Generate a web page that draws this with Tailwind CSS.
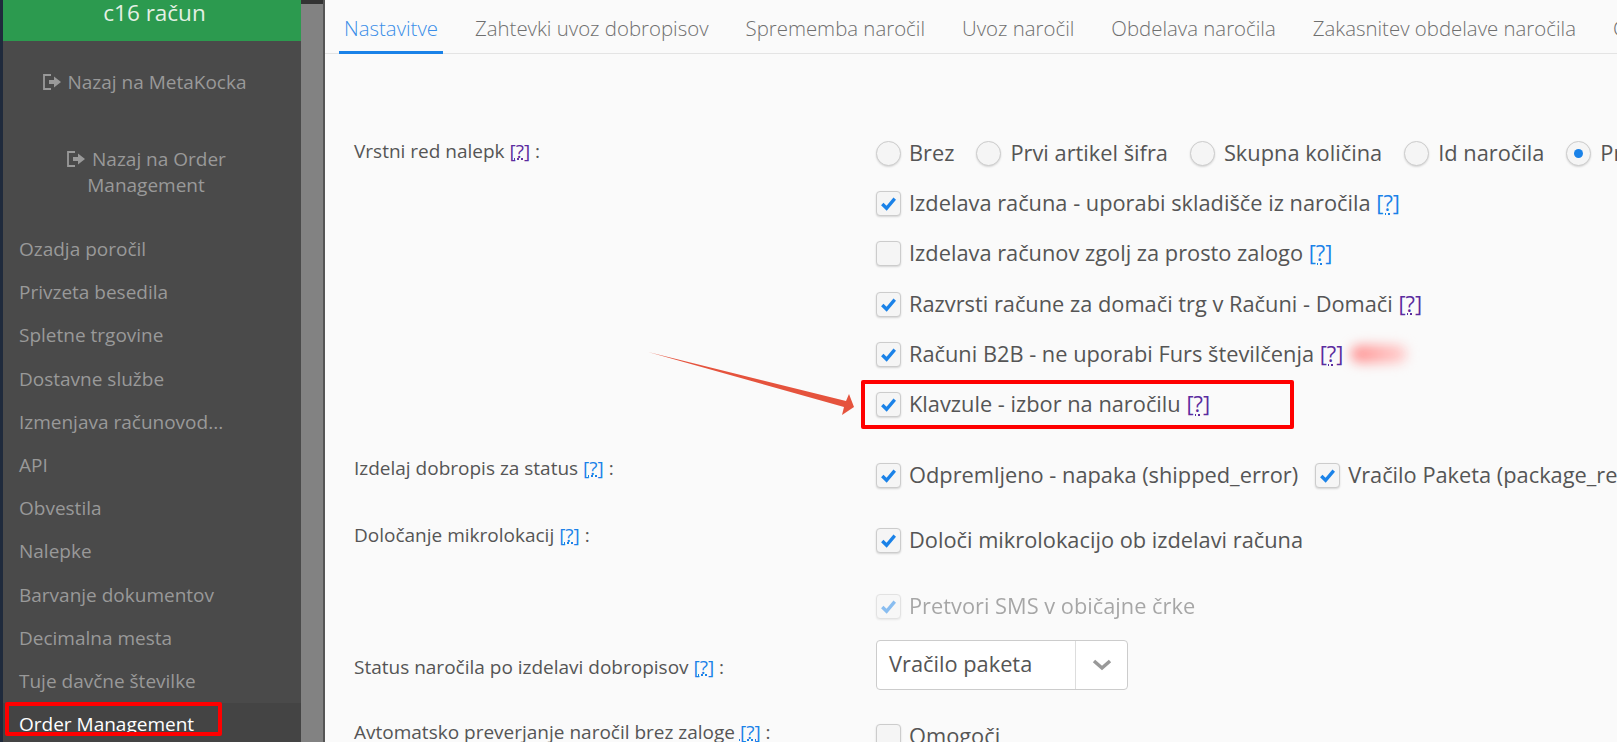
<!DOCTYPE html>
<html lang="sl">
<head>
  <meta charset="UTF-8" />
  <title>Nastavitve</title>
  <script src="https://cdn.jsdelivr.net/npm/@tailwindcss/browser@4"></script>
</head>
<body class="font-['Open_Sans',sans-serif] text-[21.8px] text-[#555] bg-[#fafafa] overflow-hidden">
  <div class="relative flex w-[1617px] h-[742px] overflow-hidden">

    <!-- sidebar -->
    <aside class="w-[301px] shrink-0 h-full border-l-[3px] border-[#1f2a3c] bg-[#4a4a4a] text-[#999] flex flex-col">
      <div class="h-[41px] shrink-0 pl-[5px] bg-[#2c9a4f] text-[#e4f0e4] text-[22.5px] leading-[26px] text-center">c16 račun</div>
      <a class="mt-[28px] shrink-0 pr-[16px] text-center leading-[26px] text-[19px]">
        <svg class="inline-block w-[20px] h-[18px] align-[-2px] mr-[1px]" viewBox="0 0 20 18"><path d="M9 2H2v14h7" fill="none" stroke="#999" stroke-width="1.800"/><path d="M7 7h5V3.500L19 9l-7 5.500V11H7z" fill="#999"/></svg>
        Nazaj na MetaKocka
      </a>
      <a class="mt-[51px] shrink-0 pl-[36px] pr-[48px] text-center leading-[26px] text-[19px]">
        <svg class="inline-block w-[20px] h-[18px] align-[-2px] mr-[1px]" viewBox="0 0 20 18"><path d="M9 2H2v14h7" fill="none" stroke="#999" stroke-width="1.800"/><path d="M7 7h5V3.500L19 9l-7 5.500V11H7z" fill="#999"/></svg>
        Nazaj na Order Management
      </a>
      <nav class="mt-[30px] shrink-0 flex flex-col text-[19px]">
        <a class="h-[43.2px] leading-[43px] pl-[16px]">Ozadja poročil</a>
        <a class="h-[43.2px] leading-[43px] pl-[16px]">Privzeta besedila</a>
        <a class="h-[43.2px] leading-[43px] pl-[16px]">Spletne trgovine</a>
        <a class="h-[43.2px] leading-[43px] pl-[16px]">Dostavne službe</a>
        <a class="h-[43.2px] leading-[43px] pl-[16px]">Izmenjava računovod...</a>
        <a class="h-[43.2px] leading-[43px] pl-[16px]">API</a>
        <a class="h-[43.2px] leading-[43px] pl-[16px]">Obvestila</a>
        <a class="h-[43.2px] leading-[43px] pl-[16px]">Nalepke</a>
        <a class="h-[43.2px] leading-[43px] pl-[16px]">Barvanje dokumentov</a>
        <a class="h-[43.2px] leading-[43px] pl-[16px]">Decimalna mesta</a>
        <a class="h-[43.2px] leading-[43px] pl-[16px]">Tuje davčne številke</a>
        <a class="h-[43.2px] leading-[43px] pl-[16px] bg-[#444] text-white font-medium">Order Management</a>
      </nav>
    </aside>

    <!-- gray strip -->
    <div class="w-[24px] shrink-0 bg-[#828282] border-r-2 border-[#555] flex flex-col">
      <div class="h-[4px] bg-[#333]"></div>
    </div>

    <!-- main -->
    <main class="flex-1 min-w-0 overflow-hidden whitespace-nowrap">
      <div class="h-[54px] border-b border-[#e4e4e4] pl-[14px] flex text-[20.4px] font-light text-[#6f6f6f]">
        <a class="h-[54px] px-[5px] mr-[26px] leading-[56px] text-[#3b8ee8] border-b-[3px] border-[#1a82e8]">Nastavitve</a>
        <a class="px-[6px] mr-[25px] leading-[56px]">Zahtevki uvoz dobropisov</a>
        <a class="px-[6px] mr-[25px] leading-[56px]">Sprememba naročil</a>
        <a class="px-[6px] mr-[25px] leading-[56px]">Uvoz naročil</a>
        <a class="px-[6px] mr-[25px] leading-[56px]">Obdelava naročila</a>
        <a class="px-[6px] mr-[25px] leading-[56px]">Zakasnitev obdelave naročila</a>
        <a class="px-[6px] leading-[56px]">C</a>
      </div>

      <div class="mt-[74px] pl-[29px]">
        <!-- Vrstni red nalepk -->
        <div class="flex items-start">
          <div class="w-[522px] shrink-0 pt-[11px] leading-[24px] text-[19px]">Vrstni red nalepk <a class="text-[#5b2c9f] underline decoration-dotted">[?]</a> :</div>
          <div class="flex flex-col">
            <div class="h-[50.3px] flex items-center">
              <span class="w-[25px] h-[25px] rounded-full border border-[#ccc] bg-[#f5f5f5] shadow-[0_1px_2px_rgba(0,0,0,0.15)] mr-[8px]"></span><span class="mr-[22px]">Brez</span>
              <span class="w-[25px] h-[25px] rounded-full border border-[#ccc] bg-[#f5f5f5] shadow-[0_1px_2px_rgba(0,0,0,0.15)] mr-[9px]"></span><span class="mr-[22px]">Prvi artikel šifra</span>
              <span class="w-[25px] h-[25px] rounded-full border border-[#ccc] bg-[#f5f5f5] shadow-[0_1px_2px_rgba(0,0,0,0.15)] mr-[9px]"></span><span class="mr-[22px]">Skupna količina</span>
              <span class="w-[25px] h-[25px] rounded-full border border-[#ccc] bg-[#f5f5f5] shadow-[0_1px_2px_rgba(0,0,0,0.15)] mr-[9px]"></span><span class="mr-[22px]">Id naročila</span>
              <span class="w-[25px] h-[25px] rounded-full border border-[#ccc] bg-[#f5f5f5] shadow-[0_1px_2px_rgba(0,0,0,0.15)] mr-[9px] flex items-center justify-center"><span class="w-[9px] h-[9px] rounded-full bg-[#1a82e8]"></span></span><span>Pr</span>
            </div>
            <div class="h-[50.3px] flex items-center">
              <span class="w-[25px] h-[25px] rounded-[4px] border border-[#ccc] bg-[#f5f5f5] shadow-[0_1px_2px_rgba(0,0,0,0.15)] mr-[8px]"><svg viewBox="0 0 24 24"><path d="M5.500 12.500L10 17L18.500 7" fill="none" stroke="#1a82e8" stroke-width="3.500"/></svg></span>
              <span>Izdelava računa - uporabi skladišče iz naročila <a class="text-[#1a82e8] underline decoration-dotted">[?]</a></span>
            </div>
            <div class="h-[50.3px] flex items-center">
              <span class="w-[25px] h-[25px] rounded-[4px] border border-[#ccc] bg-[#f5f5f5] shadow-[0_1px_2px_rgba(0,0,0,0.15)] mr-[8px]"></span>
              <span>Izdelava računov zgolj za prosto zalogo <a class="text-[#1a82e8] underline decoration-dotted">[?]</a></span>
            </div>
            <div class="h-[50.3px] flex items-center">
              <span class="w-[25px] h-[25px] rounded-[4px] border border-[#ccc] bg-[#f5f5f5] shadow-[0_1px_2px_rgba(0,0,0,0.15)] mr-[8px]"><svg viewBox="0 0 24 24"><path d="M5.500 12.500L10 17L18.500 7" fill="none" stroke="#1a82e8" stroke-width="3.500"/></svg></span>
              <span>Razvrsti račune za domači trg v Računi - Domači <a class="text-[#5b2c9f] underline decoration-dotted">[?]</a></span>
            </div>
            <div class="h-[50.3px] flex items-center">
              <span class="w-[25px] h-[25px] rounded-[4px] border border-[#ccc] bg-[#f5f5f5] shadow-[0_1px_2px_rgba(0,0,0,0.15)] mr-[8px]"><svg viewBox="0 0 24 24"><path d="M5.500 12.500L10 17L18.500 7" fill="none" stroke="#1a82e8" stroke-width="3.500"/></svg></span>
              <span>Računi B2B - ne uporabi Furs številčenja <a class="text-[#5b2c9f] underline decoration-dotted">[?]</a></span>
              <span class="ml-[8px] w-[56px] h-[18px] rounded-full bg-linear-to-r from-[#ff8f8f] to-[#ffd0d0] blur-[6px]"></span>
            </div>
            <div class="h-[50.3px] flex items-center">
              <span class="w-[25px] h-[25px] rounded-[4px] border border-[#ccc] bg-[#f5f5f5] shadow-[0_1px_2px_rgba(0,0,0,0.15)] mr-[8px]"><svg viewBox="0 0 24 24"><path d="M5.500 12.500L10 17L18.500 7" fill="none" stroke="#1a82e8" stroke-width="3.500"/></svg></span>
              <span>Klavzule - izbor na naročilu <a class="text-[#5b2c9f] underline decoration-dotted">[?]</a></span>
            </div>
          </div>
        </div>

        <!-- Izdelaj dobropis -->
        <div class="flex items-start mt-[21px]">
          <div class="w-[522px] shrink-0 pt-[5px] leading-[24px] text-[19px]">Izdelaj dobropis za status <a class="text-[#1a82e8] underline decoration-dotted">[?]</a> :</div>
          <div class="h-[50px] flex items-center">
            <span class="w-[25px] h-[25px] rounded-[4px] border border-[#ccc] bg-[#f5f5f5] shadow-[0_1px_2px_rgba(0,0,0,0.15)] mr-[8px]"><svg viewBox="0 0 24 24"><path d="M5.500 12.500L10 17L18.500 7" fill="none" stroke="#1a82e8" stroke-width="3.500"/></svg></span>
            <span class="mr-[17px]">Odpremljeno - napaka (shipped_error)</span>
            <span class="w-[25px] h-[25px] rounded-[4px] border border-[#ccc] bg-[#f5f5f5] shadow-[0_1px_2px_rgba(0,0,0,0.15)] mr-[8px]"><svg viewBox="0 0 24 24"><path d="M5.500 12.500L10 17L18.500 7" fill="none" stroke="#1a82e8" stroke-width="3.500"/></svg></span>
            <span>Vračilo Paketa (package_re</span>
          </div>
        </div>

        <!-- Mikrolokacije -->
        <div class="flex items-start mt-[15px]">
          <div class="w-[522px] shrink-0 pt-[7px] leading-[24px] text-[19px]">Določanje mikrolokacij <a class="text-[#1a82e8] underline decoration-dotted">[?]</a> :</div>
          <div class="h-[50px] flex items-center">
            <span class="w-[25px] h-[25px] rounded-[4px] border border-[#ccc] bg-[#f5f5f5] shadow-[0_1px_2px_rgba(0,0,0,0.15)] mr-[8px]"><svg viewBox="0 0 24 24"><path d="M5.500 12.500L10 17L18.500 7" fill="none" stroke="#1a82e8" stroke-width="3.500"/></svg></span>
            <span>Določi mikrolokacijo ob izdelavi računa</span>
          </div>
        </div>

        <!-- SMS -->
        <div class="flex items-start mt-[16px]">
          <div class="w-[522px] shrink-0"></div>
          <div class="h-[50px] flex items-center opacity-50">
            <span class="w-[25px] h-[25px] rounded-[4px] border border-[#ccc] bg-[#f5f5f5] shadow-[0_1px_2px_rgba(0,0,0,0.15)] mr-[8px]"><svg viewBox="0 0 24 24"><path d="M5.500 12.500L10 17L18.500 7" fill="none" stroke="#1a82e8" stroke-width="3.500"/></svg></span>
            <span>Pretvori SMS v običajne črke</span>
          </div>
        </div>

        <!-- Status narocila -->
        <div class="flex items-start mt-[8px]">
          <div class="w-[522px] shrink-0 pt-[15px] leading-[24px] text-[19px]">Status naročila po izdelavi dobropisov <a class="text-[#1a82e8] underline decoration-dotted">[?]</a> :</div>
          <div class="w-[252px] h-[50px] rounded-[4px] border border-[#ccc] bg-white flex items-center">
            <span class="w-[198px] pl-[12px]">Vračilo paketa</span>
            <span class="w-[52px] h-full border-l border-[#ddd] flex items-center justify-center">
              <svg class="w-[20px] h-[13px]" viewBox="0 0 20 13"><path d="M2 3l8 7 8-7" fill="none" stroke="#999" stroke-width="3.500"/></svg>
            </span>
          </div>
        </div>

        <!-- Avtomatsko preverjanje -->
        <div class="flex items-start mt-[22px]">
          <div class="w-[522px] shrink-0 pt-[8px] leading-[24px] text-[19px]">Avtomatsko preverjanje naročil brez zaloge <a class="text-[#1a82e8] underline decoration-dotted">[?]</a> :</div>
          <div class="h-[50px] flex items-center">
            <span class="w-[25px] h-[25px] rounded-[4px] border border-[#ccc] bg-[#f5f5f5] shadow-[0_1px_2px_rgba(0,0,0,0.15)] mr-[8px]"></span>
            <span>Omogoči</span>
          </div>
        </div>
      </div>
    </main>

    <!-- annotations drawn over the screenshot -->
    <div class="absolute left-[5px] top-[702px] w-[217px] h-[34px] border-[4px] border-[#f00] rounded-[2px]"></div>
    <div class="absolute left-[861px] top-[380px] w-[433px] h-[49px] border-[4px] border-[#f00] rounded-[2px]"></div>
    <svg class="absolute left-0 top-0 pointer-events-none" width="1617" height="742" viewBox="0 0 1617 742">
      <path d="M648 352L846 401L849 394L854 407L842 415L844 407Z" fill="#e5533d"/>
    </svg>
  </div>
</body>
</html>
